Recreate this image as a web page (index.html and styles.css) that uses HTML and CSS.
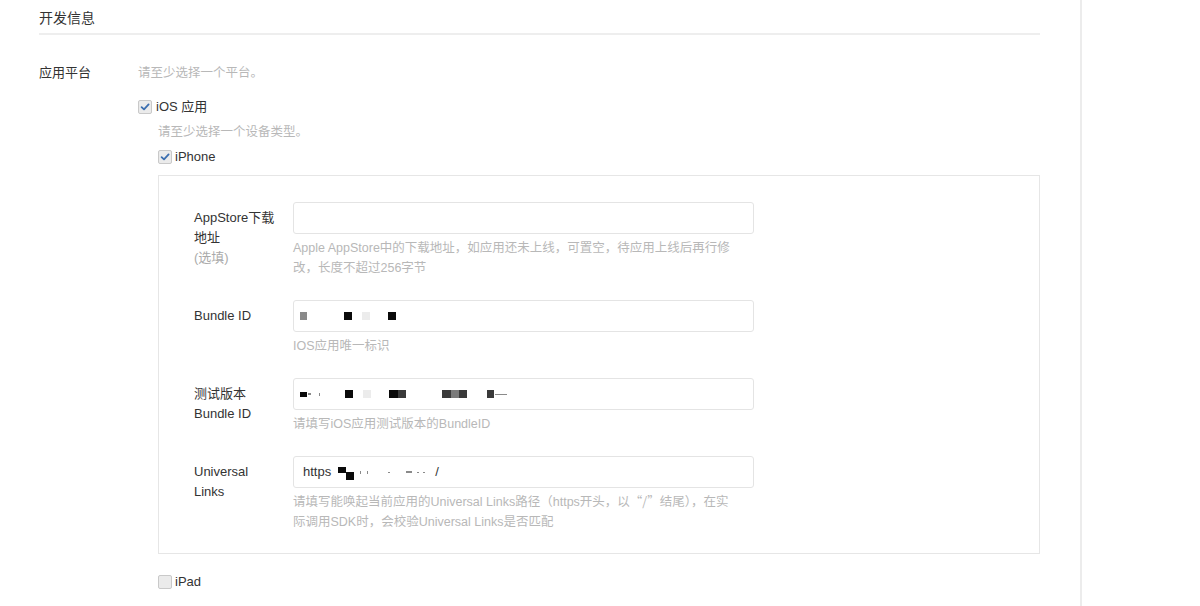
FILE: index.html
```html
<!DOCTYPE html>
<html lang="zh-CN">
<head>
<meta charset="utf-8">
<title>开发信息</title>
<link rel="stylesheet" href="styles.css">
</head>
<body>
<div class="page">
  <main class="main">
    <h2 class="section-title">开发信息</h2>
    <div class="form-row">
      <div class="form-label">应用平台</div>
      <div class="form-body">
        <div class="hint line">请至少选择一个平台。</div>
        <label class="check line top-check">
          <span class="box"><svg viewBox="0 0 14 14" width="14" height="14"><path d="M3.6 7.2 L6 9.4 L10.6 4.4" fill="none" stroke="#3c6fb0" stroke-width="1.8" stroke-linecap="round" stroke-linejoin="round"/></svg></span>
          <span>iOS 应用</span>
        </label>
        <div class="sub">
          <div class="hint line">请至少选择一个设备类型。</div>
          <label class="check line device-check">
            <span class="box"><svg viewBox="0 0 14 14" width="14" height="14"><path d="M3.6 7.2 L6 9.4 L10.6 4.4" fill="none" stroke="#3c6fb0" stroke-width="1.8" stroke-linecap="round" stroke-linejoin="round"/></svg></span>
            <span>iPhone</span>
          </label>
          <div class="panel">
            <div class="field">
              <div class="field-label">AppStore下载地址<div class="optional">(选填)</div></div>
              <div class="field-body">
                <div class="input"></div>
                <div class="hint">Apple AppStore中的下载地址，如应用还未上线，可置空，待应用上线后再行修改，长度不超过256字节</div>
              </div>
            </div>
            <div class="field">
              <div class="field-label">Bundle ID</div>
              <div class="field-body">
                <div class="input redacted">
                  <span class="px gray" style="margin-left:0;width:7px"></span>
                  <span class="px black" style="margin-left:37px;width:8px"></span>
                  <span class="px light" style="margin-left:10px;width:8px"></span>
                  <span class="px black" style="margin-left:18px;width:8px"></span>
                </div>
                <div class="hint">IOS应用唯一标识</div>
              </div>
            </div>
            <div class="field">
              <div class="field-label">测试版本 Bundle ID</div>
              <div class="field-body">
                <div class="input redacted">
                  <span class="px black" style="margin-left:0;width:7px;height:5px"></span>
                  <span class="px gray" style="margin-left:1px;width:3px;height:2px"></span>
                  <span class="px gray" style="margin-left:8px;width:1px;height:3px"></span>
                  <span class="px black" style="margin-left:25px;width:8px"></span>
                  <span class="px light" style="margin-left:10px;width:8px"></span>
                  <span class="px black" style="margin-left:18px;width:9px"></span>
                  <span class="px dark" style="margin-left:0;width:8px"></span>
                  <span class="px dark" style="margin-left:36px;width:9px"></span>
                  <span class="px mid" style="margin-left:0;width:8px"></span>
                  <span class="px dark" style="margin-left:0;width:8px"></span>
                  <span class="px dark" style="margin-left:20px;width:7px"></span>
                  <span class="px gray" style="margin-left:1px;width:12px;height:1px"></span>
                </div>
                <div class="hint">请填写iOS应用测试版本的BundleID</div>
              </div>
            </div>
            <div class="field">
              <div class="field-label">Universal Links</div>
              <div class="field-body">
                <div class="input value">
                  <span>https</span>
                  <span class="px black up" style="margin-left:7px;width:8px;height:6px"></span>
                  <span class="px black down" style="margin-left:0;width:8px;height:8px"></span>
                  <span class="px gray" style="margin-left:6px;width:1px;height:3px"></span>
                  <span class="px gray" style="margin-left:6px;width:1px;height:3px"></span>
                  <span class="px gray" style="margin-left:20px;width:2px;height:1px"></span>
                  <span class="px gray" style="margin-left:16px;width:6px;height:2px"></span>
                  <span class="px gray" style="margin-left:5px;width:2px;height:1px"></span>
                  <span class="px gray" style="margin-left:4px;width:2px;height:1px"></span>
                  <span class="slash">/</span>
                </div>
                <div class="hint">请填写能唤起当前应用的Universal Links路径（https开头，以<span class="cjk">“/”</span>结尾），在实<br>际调用SDK时，会校验Universal Links是否匹配</div>
              </div>
            </div>
          </div>
          <label class="check line ipad">
            <span class="box"></span>
            <span>iPad</span>
          </label>
        </div>
      </div>
    </div>
  </main>
  <aside class="side"></aside>
</div>
</body>
</html>
```

FILE: styles.css
```css
* { box-sizing: border-box; }
html, body { margin: 0; padding: 0; background: #fff; }
body {
  font-family: "Liberation Sans", "Noto Sans CJK SC", sans-serif;
  font-size: 13px;
  line-height: 20px;
  color: #333;
  height: 606px;
  overflow: hidden;
}
.page { display: flex; height: 606px; }
.main {
  width: 1082px;
  padding: 8px 40px 0 39px;
  border-right: 2px solid #ececec;
  flex: none;
}
.side { flex: 1; }
.section-title {
  margin: 0;
  font-size: 14px;
  font-weight: normal;
  line-height: 20px;
  padding-bottom: 5px;
  border-bottom: 2px solid #eeeeee;
  color: #333;
}
.form-row { display: flex; margin-top: 28px; }
.form-label { width: 99px; flex: none; }
.form-body { flex: 1; }
.hint { color: #b8b8b8; font-size: 12.5px; line-height: 20px; }
.cjk { font-family: "Noto Sans CJK SC", sans-serif; line-height: 1; }
.line { display: flex; align-items: center; height: 20px; }
.top-check { margin-top: 14px; }
.sub { padding-left: 20px; margin-top: 5px; }
.device-check { margin-top: 5px; }
.check { gap: 4px; cursor: default; }
.sub > .check { gap: 3px; }
.box {
  width: 14px; height: 14px; flex: none;
  border: 1px solid #c9c9c9;
  border-radius: 2px;
  background: #ebebeb;
  display: flex; align-items: center; justify-content: center;
  overflow: hidden;
}
.box svg { display: block; flex: none; }
.panel {
  margin-top: 8px;
  border: 1px solid #e6e6e6;
  padding: 26px 0 21px 35px;
}
.field { display: flex; }
.field + .field { margin-top: 22px; }
.field-label { width: 84px; margin-right: 15px; padding-top: 6px; flex: none; }
.optional { color: #aaa; }
.field-body { width: 461px; }
.input {
  height: 32px;
  border: 1px solid #e4e4e4;
  border-radius: 3px;
  background: #fff;
}
.field-body .hint { margin-top: 4px; max-width: 446px; }
.redacted { display: flex; align-items: center; padding-left: 6px; }
.value { display: flex; align-items: center; padding-left: 9px; color: #333; }
.px { display: inline-block; height: 8px; flex: none; }
.px.black { background: #0a0a0a; }
.px.dark { background: #3a3a3a; }
.px.mid { background: #7a7a7a; }
.px.gray { background: #8a8a8a; }
.px.light { background: #ececec; }
.px.up { position: relative; top: -2px; }
.px.down { position: relative; top: 4px; }
.slash { margin-left: 10px; }
.ipad { margin-top: 18px; }
```
